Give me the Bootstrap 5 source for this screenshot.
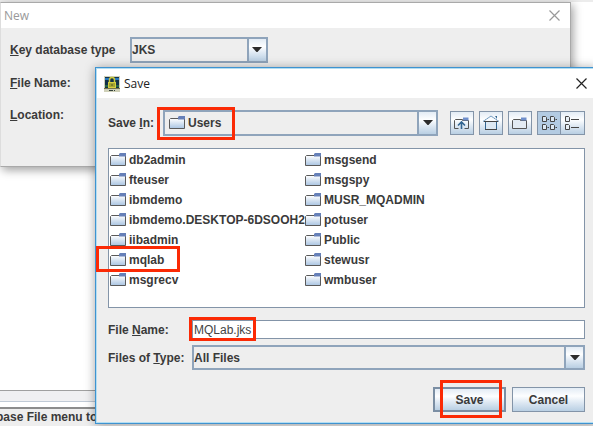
<!DOCTYPE html>
<html lang="en">
<head>
<meta charset="utf-8">
<meta name="viewport" content="width=device-width, initial-scale=1">
<title>Save</title>
<link href="https://cdn.jsdelivr.net/npm/bootstrap@5.3.0/dist/css/bootstrap.min.css" rel="stylesheet">
<style>
:root { --edge:#8394a8; --face:#eeeeee; --ink:#3a3a3a; }
body { font:bold 12px/16px "Liberation Sans", Arial, sans-serif; color:var(--ink); background:#fff; }
.desk { min-height:100vh; overflow:hidden; }
.topstrip { height:2px; background:#ececec; }
.hscroll { height:12px; background:#f0f0f2; border-top:1px solid #a0a0a0; border-bottom:1px solid #c0cad6; }
.statusline { height:19px; margin-top:5px; margin-left:-4px; border-top:2px solid #8c8c8c; background:#eee; white-space:nowrap; }
.win { position:absolute; background:var(--face); }
.win-new { left:0; right:22px; top:2px; height:165px; border:1px solid #a9a9a9; border-left-color:#ddd; box-shadow:2px 3px 9px rgba(0,0,0,.38); }
.win-save { left:95px; right:-5px; top:67px; border:1px solid #3f93d0; box-shadow:inset 0 0 0 1px #b4def2, 0 1px 10px rgba(0,0,0,.36); }
.titlebar { font:12px/16px "Open Sans", sans-serif; background:#fff; }
.win-new .titlebar { height:25px; color:#999; padding:0 10px 0 3px; }
.win-save .titlebar { height:29px; margin:1px 0 0 1px; color:#222; padding:0 10px 0 7px; }
.closer { border:0; background:none; padding:0; color:inherit; display:flex; }
.body-new { padding:9px; }
.body-save { padding:12px 12px 11px; }
.labelcol { width:120px; }
.rowlab { width:84px; }
.w-in { width:55px; }
.combo { border:2px solid #8fa4bb; height:26px; }
.combo select { appearance:none; border:0; background:transparent; font:inherit; color:inherit; padding:0; min-width:0; outline:0; }
.combo-dir { margin-right:12px; }
.combo-dir select { padding-left:3px; }
.arrow { width:19px; border-left:2px solid #8fa4bb; pointer-events:none; }
.metal { background:linear-gradient(#e3ecf5 0,#fdfeff 35%,#dce7f2 65%,#b9cfe3 100%); }
.tools { gap:5px; }
.tool { width:24px; height:24px; padding:0; border:1px solid var(--edge); }
.tool.on { background:#b3cbe2; }
.files { height:160px; border:1px solid var(--edge); background:#fff; padding:1px; margin:12px 0; display:grid; grid-template-columns:195px 1fr; grid-template-rows:repeat(7,20px); grid-auto-flow:column; list-style:none; white-space:nowrap; }
.files li { display:flex; align-items:center; gap:3px; }
.files svg { flex:none; }
.namefield { height:19px; border:1px solid var(--edge); background:#fff; font:12px/16px "Liberation Sans", Arial, sans-serif; color:#444; padding:0 1px; min-width:0; outline:0; }
.typerow { margin:6px 0 17px; }
.combo-type { height:25px; }
.acts { gap:6px; }
.act { height:25px; width:73px; border:1px solid var(--edge); font:inherit; color:inherit; padding:0; }
.act.main { border-width:2px; border-color:#7b8ea3; }
.note { position:absolute; border:3px solid #fb2a05; pointer-events:none; z-index:3; }
.note-dir { left:157px; top:107px; width:78px; height:33px; }
.note-item { left:96px; top:246px; width:84px; height:26px; }
.note-name { left:189px; top:317px; width:67px; height:24px; }
.note-act { left:440px; top:380px; width:62px; height:38px; }
</style>
<script src="https://cdn.jsdelivr.net/npm/bootstrap@5.3.0/dist/js/bootstrap.bundle.min.js"></script>
</head>
<body>
<svg width="0" height="0" class="position-absolute" aria-hidden="true">
  <linearGradient id="fold" x1="0" y1="0" x2="0" y2="1"><stop offset=".1" stop-color="#fff"/><stop offset="1" stop-color="#a9c4e2"/></linearGradient>
  <symbol id="folder" viewBox="0 0 16 16">
    <path d="M.5 13.500V4.500l1-1H9l1-1h5.500v11z" fill="url(#fold)" stroke="#5a5a5a"/>
    <path d="M10 1h6v3.500H9V2z" fill="#6680b8"/>
  </symbol>
  <symbol id="down" viewBox="0 0 10 6"><path d="M0 0h10L5.500 5h-1z" fill="#2b2b2b"/></symbol>
  <symbol id="cross" viewBox="0 0 11 11"><path d="M.5.5l10 10M10.500.5l-10 10" stroke="currentColor" stroke-width="1.200"/></symbol>
</svg>

<div class="desk d-flex flex-column position-relative">
  <div class="topstrip"></div>
  <div class="flex-fill"></div>
  <div class="hscroll"></div>
  <div class="statusline">base File menu to</div>

  <section class="win win-new" aria-label="New">
    <div class="titlebar d-flex align-items-center justify-content-between">
      <span>New</span>
      <button class="closer" aria-label="Close New"><svg width="11" height="11"><use href="#cross"/></svg></button>
    </div>
    <div class="body-new">
      <div class="d-flex align-items-center">
        <label class="labelcol" for="dbtype"><u>K</u>ey database type</label>
        <div class="combo d-flex col-3">
          <select id="dbtype" class="flex-fill"><option>JKS</option></select>
          <span class="arrow metal d-flex align-items-center justify-content-center"><svg width="10" height="6"><use href="#down"/></svg></span>
        </div>
      </div>
      <div class="mt-2 pt-1"><u>F</u>ile Name:</div>
      <div class="mt-3"><u>L</u>ocation:</div>
    </div>
  </section>

  <section class="win win-save" role="dialog" aria-label="Save">
    <div class="titlebar d-flex align-items-center">
      <svg width="16" height="16" viewBox="0 0 16 16" class="me-1">
        <path d="M0 0h16v16H0z" fill="#cfd0b8"/><path d="M1 1h14v11H1z" fill="#12314a"/>
        <path d="M1 2h4v2H1zM11 2h4v2h-4z" fill="#2577bd"/><path d="M1 9h14v2H1z" fill="#286641"/>
        <path d="M5.500 7V4q0-2.500 2.500-2.500T10.500 4v3" fill="none" stroke="#c9c83d" stroke-width="1.500"/>
        <path d="M4 6h8v6H4z" fill="#d5cf40"/><path d="M6 7v4M10 7v4" stroke="#777a20"/><path d="M7.500 7.500h1v3h-1z" fill="#263312"/>
        <path d="M0 12h16v1H0z" fill="#75754a"/><path d="M5 14.500h4M10 14.500h1" stroke="#34413b"/>
      </svg>
      <span class="flex-fill">Save</span>
      <button class="closer" aria-label="Close Save"><svg width="11" height="11"><use href="#cross"/></svg></button>
    </div>
    <div class="body-save">
      <div class="d-flex align-items-center">
        <label class="w-in" for="dir">Save <u>I</u>n:</label>
        <div class="combo combo-dir d-flex align-items-stretch flex-fill">
          <svg width="16" height="16" class="align-self-center ms-1 flex-shrink-0"><use href="#folder"/></svg>
          <select id="dir" class="flex-fill"><option>Users</option></select>
          <span class="arrow metal d-flex align-items-center justify-content-center"><svg width="10" height="6"><use href="#down"/></svg></span>
        </div>
        <div class="d-flex tools">
          <button class="tool metal" aria-label="Up one level"><svg class="d-block" width="22" height="22" viewBox="0 0 22 22" fill="none" stroke="#555"><path d="M7.500 16.500h-4v-8l1-1h7v1h6v8h-4"/><path d="M12 5.500h5.500v3H12z" fill="#6f8fcb" stroke="none"/><path d="M10.500 17v-6M7 13.500l3.500-3.500 3.500 3.500" stroke="#326591" stroke-width="1.600"/></svg></button>
          <button class="tool metal" aria-label="Home"><svg class="d-block" width="22" height="22" viewBox="0 0 22 22" fill="none"><path d="M5.500 9v8.500h11V9" stroke="#326591"/><path d="M3 9.500l8-5.500 8 5.500" stroke="#5788b5" stroke-dasharray="2 .5"/><path d="M4 9.500h14" stroke="#444"/><path d="M6 10h10v7H6z" fill="#dce8f3"/><path d="M5 17.500h12" stroke="#444"/><path d="M15 4h2v3z" fill="#326591"/></svg></button>
          <button class="tool metal" aria-label="New folder"><svg class="d-block" width="22" height="22" viewBox="0 0 22 22"><path d="M3.500 16.500v-8l1-1h7v1h6v8z" fill="#e3ebf3" stroke="#555"/><path d="M12 5.500h5.500v3H12z" fill="#6f8fcb"/></svg></button>
          <div class="d-flex">
            <button class="tool on" aria-label="List view"><svg class="d-block" width="22" height="22" viewBox="0 0 22 22" fill="#dce8f3" stroke="#454545"><path d="M4.500 4.500h3l1 1v4h-4zM12.500 4.500h3l1 1v4h-4zM4.500 12.500h3l1 1v4h-4zM12.500 12.500h3l1 1v4h-4zM9.500 7.500H11M17.500 7.500H19M9.500 15.500H11M17.500 15.500H19"/></svg></button>
            <button class="tool metal border-start-0" aria-label="Details view"><svg class="d-block" width="22" height="22" viewBox="0 0 22 22" fill="#e8eff6" stroke="#454545"><path d="M4.500 4.500h3l1 1v4h-4zM4.500 12.500h3l1 1v4h-4zM10 7.500h8M10 15.500h8"/></svg></button>
          </div>
        </div>
      </div>

      <ul class="files">
        <li><svg width="16" height="16"><use href="#folder"/></svg>db2admin</li>
        <li><svg width="16" height="16"><use href="#folder"/></svg>fteuser</li>
        <li><svg width="16" height="16"><use href="#folder"/></svg>ibmdemo</li>
        <li><svg width="16" height="16"><use href="#folder"/></svg>ibmdemo.DESKTOP-6DSOOH2</li>
        <li><svg width="16" height="16"><use href="#folder"/></svg>iibadmin</li>
        <li><svg width="16" height="16"><use href="#folder"/></svg>mqlab</li>
        <li><svg width="16" height="16"><use href="#folder"/></svg>msgrecv</li>
        <li><svg width="16" height="16"><use href="#folder"/></svg>msgsend</li>
        <li><svg width="16" height="16"><use href="#folder"/></svg>msgspy</li>
        <li><svg width="16" height="16"><use href="#folder"/></svg>MUSR_MQADMIN</li>
        <li><svg width="16" height="16"><use href="#folder"/></svg>potuser</li>
        <li><svg width="16" height="16"><use href="#folder"/></svg>Public</li>
        <li><svg width="16" height="16"><use href="#folder"/></svg>stewusr</li>
        <li><svg width="16" height="16"><use href="#folder"/></svg>wmbuser</li>
      </ul>

      <div class="d-flex align-items-center">
        <label class="rowlab" for="fname">File <u>N</u>ame:</label>
        <input id="fname" class="namefield flex-fill" type="text" value="MQLab.jks">
      </div>
      <div class="typerow d-flex align-items-center">
        <label class="rowlab" for="ftype">Files of <u>T</u>ype:</label>
        <div class="combo combo-type d-flex flex-fill">
          <select id="ftype" class="flex-fill"><option>All Files</option></select>
          <span class="arrow metal d-flex align-items-center justify-content-center"><svg width="10" height="6"><use href="#down"/></svg></span>
        </div>
      </div>
      <div class="acts d-flex justify-content-end">
        <button class="act main metal">Save</button>
        <button class="act metal">Cancel</button>
      </div>
    </div>
  </section>

  <div class="note note-dir"></div>
  <div class="note note-item"></div>
  <div class="note note-name"></div>
  <div class="note note-act"></div>
</div>
</body>
</html>
